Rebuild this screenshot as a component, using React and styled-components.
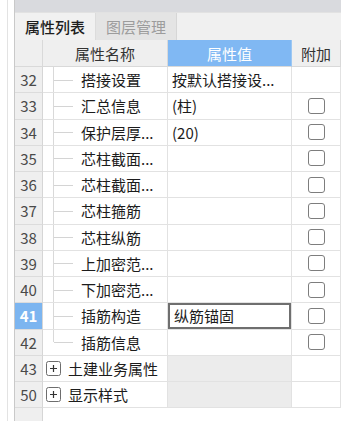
import React from "react";
import styled, { createGlobalStyle } from "styled-components";

const Global = createGlobalStyle`
  html, body { margin: 0; padding: 0; background: #ffffff; }
  body { font-family: "Noto Sans CJK SC", "Noto Sans", sans-serif; }
  * { box-sizing: border-box; }
`;

const COLS = "28px 125px 124px 1fr";

const Root = styled.div`
  display: flex;
  width: 341px;
  height: 421px;
  overflow: hidden;
  background: #fff;
`;

const Gutter = styled.div`
  width: 15px;
  flex: none;
  padding-left: 7px;
  border-right: 1px solid #c9c9c9;
`;

const GutterLine = styled.div`
  height: 100%;
  border-left: 1px solid #e3e3e3;
`;

const Panel = styled.div`
  flex: 1;
  display: flex;
  flex-direction: column;
  min-width: 0;
`;

const TopBar = styled.div`
  height: 12px;
  background: #d9dade;
  flex: none;
`;

const TabBar = styled.div`
  height: 28px;
  flex: none;
  display: flex;
  background: #f0f0f0;
  border-top: 1px solid #e2e2e2;
`;

const Tab = styled.div`
  width: ${(p) => (p.$active ? 81 : 81)}px;
  display: flex;
  align-items: center;
  justify-content: center;
  font-size: 15px;
  color: ${(p) => (p.$active ? "#1e1e1e" : "#9c9c9c")};
  background: ${(p) => (p.$active ? "#f1f1f1" : "#e4e4e4")};
  border-right: 1px solid ${(p) => (p.$active ? "#dcdcdc" : "#d6d6d6")};
  font-weight: ${(p) => (p.$active ? 500 : 400)};
`;

const Table = styled.div`
  flex: 1;
  display: flex;
  flex-direction: column;
`;

const HeaderRow = styled.div`
  display: grid;
  grid-template-columns: ${COLS};
  height: 27px;
  flex: none;
`;

const HeadCell = styled.div`
  display: flex;
  align-items: center;
  justify-content: center;
  font-size: 15px;
  color: ${(p) => (p.$selected ? "#ffffff" : "#333")};
  background: ${(p) => (p.$selected ? "#80b8f3" : "#efefef")};
  border-right: 1px solid ${(p) => (p.$selected ? "#9cc7f3" : "#d9d9d9")};
  border-bottom: 1px solid #d9d9d9;
`;

const Row = styled.div`
  display: grid;
  grid-template-columns: ${COLS};
  height: 26.25px;
  flex: none;
`;

const NumCell = styled.div`
  display: flex;
  align-items: center;
  justify-content: center;
  font-size: 15px;
  color: ${(p) => (p.$active ? "#ffffff" : "#4a4a4a")};
  font-weight: ${(p) => (p.$active ? 700 : 400)};
  background: ${(p) => (p.$active ? "#7cb5f0" : "#efefef")};
  border-right: 1px solid #d6d6d6;
  border-bottom: 1px solid #dcdcdc;
`;

const Cell = styled.div`
  display: flex;
  align-items: center;
  font-size: 15px;
  color: #1c1c1c;
  white-space: nowrap;
  overflow: hidden;
  background: ${(p) => (p.$shaded ? "#ececec" : "#ffffff")};
  border-right: 1px solid #e2e2e2;
  border-bottom: 1px solid #e2e2e2;
  justify-content: ${(p) => (p.$center ? "center" : "flex-start")};
  padding-left: ${(p) => (p.$center ? 0 : 4)}px;
`;

const EditBox = styled.div`
  flex: 1;
  height: 100%;
  margin-left: -4px;
  padding-left: 4px;
  display: flex;
  align-items: center;
  border: 2px solid #6f6f6f;
  background: #fff;
`;

const Connector = styled.div`
  position: relative;
  width: 20px;
  height: 100%;
  margin-left: 6px;
  flex: none;
  &::before {
    content: "";
    position: absolute;
    left: 0;
    top: 0;
    height: ${(p) => (p.$last ? "50%" : "100%")};
    border-left: 1px solid #d9d9d9;
  }
  &::after {
    content: "";
    position: absolute;
    left: 1px;
    top: 50%;
    width: 19px;
    border-top: 1px solid #d4d4d4;
  }
`;

const NameText = styled.span`
  margin-left: 8px;
`;

const GroupText = styled.span`
  margin-left: 7px;
`;

const Check = styled.div`
  width: 17px;
  height: 16px;
  border: 1px solid #7d7d7d;
  border-radius: 3px;
  background: #fff;
`;

const PlusBox = styled.svg`
  width: 15px;
  height: 15px;
  flex: none;
  margin-left: -1px;
`;

const Filler = styled.div`
  flex: 1;
  display: grid;
  grid-template-columns: ${COLS};
`;

const FillNum = styled.div`
  background: #efefef;
  border-right: 1px solid #d6d6d6;
`;

const Plus = () => (
  <PlusBox viewBox="0 0 15 15">
    <rect x="0.5" y="0.5" width="14" height="14" rx="2" fill="#fff" stroke="#6d6d6d" />
    <path d="M4 7.5h7M7.5 4v7" stroke="#333" strokeWidth="1.2" />
  </PlusBox>
);

const rows = [
  { n: 32, name: "搭接设置", value: "按默认搭接设...", check: false },
  { n: 33, name: "汇总信息", value: "(柱)", check: true },
  { n: 34, name: "保护层厚...", value: "(20)", check: true },
  { n: 35, name: "芯柱截面...", value: "", check: true },
  { n: 36, name: "芯柱截面...", value: "", check: true },
  { n: 37, name: "芯柱箍筋", value: "", check: true },
  { n: 38, name: "芯柱纵筋", value: "", check: true },
  { n: 39, name: "上加密范...", value: "", check: true },
  { n: 40, name: "下加密范...", value: "", check: true },
  { n: 41, name: "插筋构造", value: "纵筋锚固", check: true, active: true },
  { n: 42, name: "插筋信息", value: "", check: true, last: true },
];

const groups = [
  { n: 43, name: "土建业务属性" },
  { n: 50, name: "显示样式" },
];

export default function App() {
  return (
    <>
      <Global />
      <Root>
        <Gutter>
          <GutterLine />
        </Gutter>
        <Panel>
          <TopBar />
          <TabBar>
            <Tab $active>属性列表</Tab>
            <Tab>图层管理</Tab>
          </TabBar>
          <Table>
            <HeaderRow>
              <HeadCell />
              <HeadCell>属性名称</HeadCell>
              <HeadCell $selected>属性值</HeadCell>
              <HeadCell>附加</HeadCell>
            </HeaderRow>
            {rows.map((r) => (
              <Row key={r.n}>
                <NumCell $active={r.active}>{r.n}</NumCell>
                <Cell>
                  <Connector $last={r.last} />
                  <NameText>{r.name}</NameText>
                </Cell>
                <Cell>{r.active ? <EditBox>{r.value}</EditBox> : r.value}</Cell>
                <Cell $center>{r.check && <Check />}</Cell>
              </Row>
            ))}
            {groups.map((g) => (
              <Row key={g.n}>
                <NumCell>{g.n}</NumCell>
                <Cell>
                  <Plus />
                  <GroupText>{g.name}</GroupText>
                </Cell>
                <Cell $shaded />
                <Cell />
              </Row>
            ))}
            <Filler>
              <FillNum />
            </Filler>
          </Table>
        </Panel>
      </Root>
    </>
  );
}
